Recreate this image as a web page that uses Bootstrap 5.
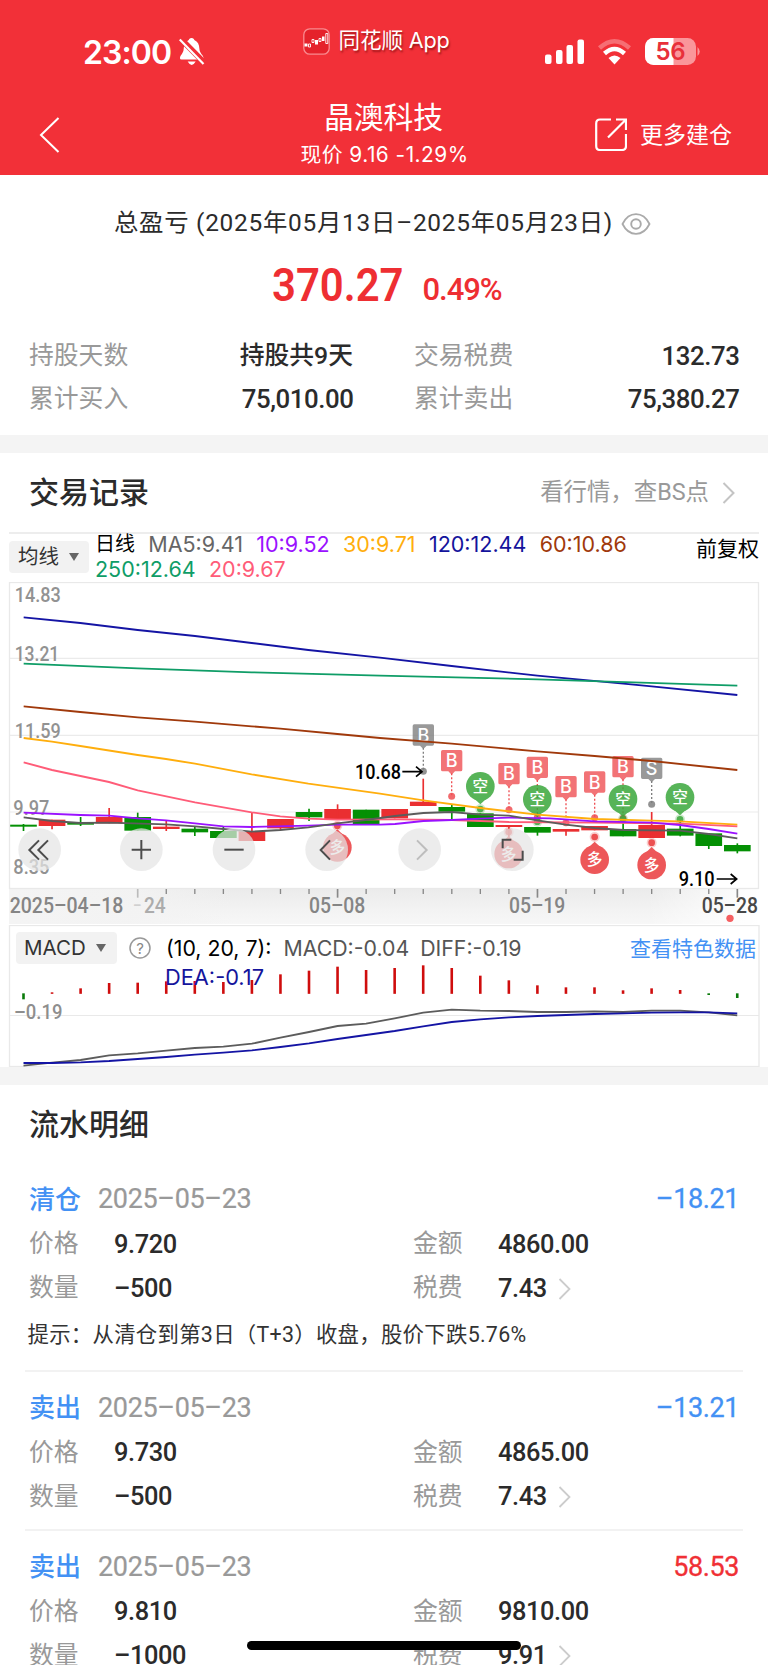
<!DOCTYPE html>
<html lang="zh-CN">
<head>
<meta charset="utf-8">
<meta name="viewport" content="width=device-width, initial-scale=1">
<title>晶澳科技 交易记录</title>
<link href="https://cdn.jsdelivr.net/npm/bootstrap@5.3.0/dist/css/bootstrap.min.css" rel="stylesheet">
<style>
html,body{height:1665px;overflow:hidden}
body{font-family:Roboto,"Noto Sans CJK SC",sans-serif;color:#2b2b2b;font-size:24.8px;line-height:1;background:#fff}
svg{display:block;flex:none}
.sf{font-family:Inter,"Noto Sans CJK SC",sans-serif}
.top-area{background:#f23038;color:#fff;height:174.500px}
.status{height:92px;padding:0 68px 0 83px}
.clock{font-size:32px;font-weight:600;letter-spacing:-.9px;width:96px;margin-top:14px}
.status svg{margin-top:12px}
.app-tag{font-size:21.6px;margin:-10px 0 0 98px;gap:9px;text-shadow:1px 2px 2px rgba(90,0,0,.55)}
.app-tag svg{margin:0}
.app-tag span{letter-spacing:-.15px}
.title-row{height:82px;padding:0 36px 0 38px}
.side{width:200px;padding-top:3px}
.stock{font-size:29.8px;line-height:38px;margin-top:5px;margin-left:-3px}
.price-line{font-size:20.8px;line-height:37px;letter-spacing:.5px;margin-left:-1px}
.more{font-size:23px;gap:13px}
.more span{padding-top:2px}
.sum-head{height:98px;font-size:24.4px;gap:8px;padding-right:3px}
.sum-head .txt{letter-spacing:.74px}
.sum-num{height:25px;gap:21px;color:#ee2e32;padding-left:5px;line-height:24px}
.big{font-size:46px;font-weight:600;display:inline-block;width:130px;transform:scaleX(.91);transform-origin:left}
.pct{font-size:31px;font-weight:500;margin-top:9px;letter-spacing:-1.1px}
.stats{padding:37.500px 29px 0;height:137.500px}
.stats .line-row{height:43px}
.line-row>div{display:flex;justify-content:space-between;align-items:center}
.line-row>div:first-child{width:324px;margin-right:61px}
.line-row>div:last-child{width:325px}
.lbl{color:#999}
.val{font-weight:500;color:#2b2b2b}
.stats .num{font-size:25.8px;letter-spacing:-.45px;margin-right:-.4px}
.band{height:18px;background:#f4f4f4}
.sec{font-size:30px;font-weight:500;color:#2b2b2b}
.rec-head{height:79px;padding:0 33px 0 29px}
.rec-head .lnk{font-size:23.4px;color:#999;gap:13px}
.legend-bar{height:50px;margin:0 9px;border-top:2px solid #ededed}
.drop{background:#f2f2f2;border:0;border-radius:4px;color:#333;height:32px;padding:0 9px;display:flex;align-items:center;gap:10px;font-size:20.5px}
.drop:after{content:"";border:5.5px solid transparent;border-top:8px solid #666;border-bottom:0}
.legend-bar .drop{width:80px;margin-top:7px;flex:none}
.ma{font-size:21.5px;line-height:25px;margin:-2px 0 0 6px;width:590px;column-gap:13.3px}
.adj{font-size:21px;color:#000;line-height:31px;margin-left:auto}
.macd-panel{height:142px;position:relative}
.macd-head{position:absolute;left:16px;right:12px;top:7px;height:32px;font-size:21.3px}
.macd-head>span{padding-top:1px}
.macd-head .drop{width:101px;padding:0 8px}
.help{margin:0 15px 0 12px}
.dea{position:absolute;left:165px;top:40px;line-height:25px;font-size:21.8px;color:#14149c}
.detail-head{height:80px;padding-left:29px}
.rec{margin:0 25px;padding:0 4px;border-bottom:2px solid #f2f2f2}
.rec .h{height:46px;font-size:26px}
.dt{color:#999;font-size:27px;letter-spacing:-.35px;margin-left:17px;-webkit-text-stroke:.2px currentColor}
.amt{font-size:27px;margin-left:auto;letter-spacing:-.4px;-webkit-text-stroke:.3px currentColor}
.kv{height:44px}
.kv>div{display:flex;align-items:center;width:384px;flex:none}
.kv .lbl{width:85px}
.kv .val{font-size:25.4px;letter-spacing:-.4px;font-weight:500}
.hint{font-size:21.4px;height:48px;margin-left:-1.500px;color:#333;letter-spacing:.28px}
.chev{margin-left:11px}
.blue{color:#4391f4}.redc{color:#f03035}
.home{position:fixed;left:247px;top:1641px;width:274px;height:9px;border-radius:5px;background:#000}
</style>
</head>
<body>
<header class="top-area">
  <div class="status d-flex align-items-center sf">
    <span class="clock">23:00</span>
    <svg width="25.500" height="27.500" viewBox="0 0 26 28"><path d="M12.800 0C10.800 0 10.300 1.200 10 2C6.500 3.500 5 6.500 4.800 11C4.600 16 1 17.500 1 20.500Q1 21.800 2.500 21.800H23.500Q25 21.800 25 20.500C25 17.500 21 16 20.800 11C20.600 6.500 19.200 3.500 15.600 2C15.300 1.200 14.800 0 12.800 0ZM8.800 24Q13 31 17 24Z" fill="#fff"/><path d="M1 0L26 25.500" stroke="#f23038" stroke-width="6"/><path d="M.8 1.500L25 26.500" stroke="#fff" stroke-width="2.200"/></svg>
    <div class="app-tag d-flex align-items-center">
      <svg width="27" height="27" viewBox="0 0 27 27"><rect x=".8" y=".8" width="25.400" height="25.400" rx="6" fill="#e5222b" stroke="#f98b90" stroke-width="1.300"/><path d="M1.500 15.500h3v3h-3zM12 12h3v4.500h-3zM19 8.500h2.500V13H19z" fill="#fff"/><path d="M5.500 16h2v3h-2zM9 11.500h2v3h-2zM16 10.500h2v3h-2zM22.800 5.500h2v10h-2z" fill="none" stroke="#fff" stroke-width=".9"/></svg>
      <span>同花顺 App</span>
    </div>
    <svg class="ms-auto" width="156" height="28" viewBox="544 38 156 28"><g fill="#fff"><rect x="545" y="54.500" width="6.500" height="9.500" rx="2"/><rect x="556" y="50" width="6.500" height="14" rx="2"/><rect x="566.500" y="45" width="6.500" height="19" rx="2"/><rect x="577.500" y="39.500" width="6.500" height="24.500" rx="2"/></g>
    <g fill="none" stroke="#fff" stroke-width="4.500"><path d="M599.500 48Q614.500 34.500 629.500 48" opacity=".3"/><path d="M604.500 53.500Q614.500 44.500 624.500 53.500"/></g><path d="M608.500 58Q614.500 53 620.500 58L614.500 64.500Z" fill="#fff"/>
    <rect x="645" y="38" width="51" height="27" rx="8.500" fill="#fa969a"/><path d="M673.500 38H653.500A8.500 8.500 0 0 0 645 46.500V56.500A8.500 8.500 0 0 0 653.500 65H673.500Z" fill="#fff"/><path d="M697.500 47Q702 51.500 697.500 56Z" fill="#fa969a"/><text x="670.500" y="60" text-anchor="middle" font-size="24" font-weight="600" fill="#e8303a" textLength="30">56</text></svg>
  </div>
  <div class="title-row d-flex align-items-center justify-content-between">
    <div class="side"><svg width="22" height="38" viewBox="0 0 22 38"><path d="M20.500 2L3 19L20.500 36" fill="none" stroke="#fff" stroke-width="2"/></svg></div>
    <div class="text-center sf"><div class="stock">晶澳科技</div><div class="price-line">现价 9.16 -1.29%</div></div>
    <div class="side more d-flex align-items-center justify-content-end"><svg width="32" height="33" viewBox="0 0 32 33"><path d="M16 1.500H5Q1.200 1.500 1.200 5.500V28Q1.200 32 5 32H27Q31 32 31 28V16M13 19.500L30.500 2M21 1.500H31V12" fill="none" stroke="#fff" stroke-width="2.200"/></svg><span>更多建仓</span></div>
  </div>
</header>

<section>
  <div class="sum-head d-flex align-items-center justify-content-center"><span class="txt">总盈亏 (2025年05月13日–2025年05月23日)</span>
    <svg width="30" height="22" viewBox="0 0 30 22"><path d="M1.500 11C5 4 9.500 1.200 15 1.200S25 4 28.500 11C25 18 20.500 20.800 15 20.800S5 18 1.500 11Z" fill="none" stroke="#aaa" stroke-width="1.800"/><circle cx="15" cy="11" r="4.800" fill="none" stroke="#aaa" stroke-width="1.900"/></svg></div>
  <div class="sum-num d-flex justify-content-center align-items-center"><span class="big">370.27</span><span class="pct">0.49%</span></div>
  <div class="stats">
    <div class="line-row d-flex"><div><span class="lbl">持股天数</span><span class="val">持股共9天</span></div><div><span class="lbl">交易税费</span><span class="val num">132.73</span></div></div>
    <div class="line-row d-flex"><div><span class="lbl">累计买入</span><span class="val num">75,010.00</span></div><div><span class="lbl">累计卖出</span><span class="val num">75,380.27</span></div></div>
  </div>
</section>
<div class="band"></div>

<section>
  <div class="rec-head d-flex align-items-center justify-content-between"><span class="sec">交易记录</span>
    <span class="lnk d-flex align-items-center"><span>看行情，查BS点</span><svg width="13" height="22" viewBox="0 0 13 22"><path d="M1.500 1L11.500 11L1.500 21" fill="none" stroke="#c4c4c4" stroke-width="2"/></svg></span></div>
  <div class="legend-bar d-flex">
    <button class="drop">均线</button>
    <div class="ma sf d-flex flex-wrap align-content-start"><span style="color:#000;font-size:20px">日线</span><span style="color:#666">MA5:9.41</span><span style="color:#9a12ff">10:9.52</span><span style="color:#ffae0d">30:9.71</span><span style="color:#14149c">120:12.44</span><span style="color:#a0390b">60:10.86</span><span style="color:#0f9d67">250:12.64</span><span style="color:#ff5c78">20:9.67</span></div>
    <span class="adj">前复权</span>
  </div>
  <svg id="kline" width="768" height="343" viewBox="0 36 2304 1029" font-family="Roboto,'Noto Sans CJK SC',sans-serif"></svg>
  <div class="macd-panel">
    <svg id="macd" width="768" height="142" viewBox="0 925 768 142" font-family="Roboto,sans-serif"></svg>
    <div class="macd-head sf d-flex align-items-center">
      <button class="drop sf">MACD</button>
      <svg class="help" width="22" height="22" viewBox="0 0 22 22"><circle cx="11" cy="11" r="10" fill="none" stroke="#999" stroke-width="1.500"/><text x="11" y="16.500" text-anchor="middle" font-size="15" fill="#888">?</text></svg>
      <span style="color:#000">(10, 20, 7):</span><span style="color:#555;margin-left:12px">MACD:-0.04</span><span style="color:#555;margin-left:11px">DIFF:-0.19</span>
      <span class="ms-auto blue" style="font-size:21px">查看特色数据</span>
    </div>
    <div class="dea sf">DEA:-0.17</div>
  </div>
</section>
<div class="band"></div>

<section>
  <div class="detail-head d-flex align-items-center sec">流水明细</div>
  <div class="rec" style="height:206.500px;padding-top:11.500px">
    <div class="h d-flex align-items-center"><span class="blue fw-medium">清仓</span><span class="dt">2025–05–23</span><span class="amt blue">–18.21</span></div>
    <div class="kv d-flex"><div><span class="lbl">价格</span><span class="val">9.720</span></div><div><span class="lbl">金额</span><span class="val">4860.00</span></div></div>
    <div class="kv d-flex"><div><span class="lbl">数量</span><span class="val">–500</span></div><div><span class="lbl">税费</span><span class="val">7.43</span><svg class="chev" width="13" height="22" viewBox="0 0 13 22"><path d="M1.500 1L11.500 11L1.500 21" fill="none" stroke="#ccc" stroke-width="1.800"/></svg></div></div>
    <div class="hint d-flex align-items-center">提示：从清仓到第3日（T+3）收盘，股价下跌5.76%</div>
  </div>
  <div class="rec" style="height:159px;padding-top:13.500px">
    <div class="h d-flex align-items-center"><span class="blue fw-medium">卖出</span><span class="dt">2025–05–23</span><span class="amt blue">–13.21</span></div>
    <div class="kv d-flex"><div><span class="lbl">价格</span><span class="val">9.730</span></div><div><span class="lbl">金额</span><span class="val">4865.00</span></div></div>
    <div class="kv d-flex"><div><span class="lbl">数量</span><span class="val">–500</span></div><div><span class="lbl">税费</span><span class="val">7.43</span><svg class="chev" width="13" height="22" viewBox="0 0 13 22"><path d="M1.500 1L11.500 11L1.500 21" fill="none" stroke="#ccc" stroke-width="1.800"/></svg></div></div>
  </div>
  <div class="rec" style="height:159px;padding-top:13.500px">
    <div class="h d-flex align-items-center"><span class="blue fw-medium">卖出</span><span class="dt">2025–05–23</span><span class="amt redc">58.53</span></div>
    <div class="kv d-flex"><div><span class="lbl">价格</span><span class="val">9.810</span></div><div><span class="lbl">金额</span><span class="val">9810.00</span></div></div>
    <div class="kv d-flex"><div><span class="lbl">数量</span><span class="val">–1000</span></div><div><span class="lbl">税费</span><span class="val">9.91</span><svg class="chev" width="13" height="22" viewBox="0 0 13 22"><path d="M1.500 1L11.500 11L1.500 21" fill="none" stroke="#ccc" stroke-width="1.800"/></svg></div></div>
  </div>
</section>
<div class="home"></div>
<script src="https://cdn.jsdelivr.net/npm/bootstrap@5.3.0/dist/js/bootstrap.bundle.min.js"></script>
<script>
// Daily candles: colour, body top, body bottom, wick top, wick bottom
const R='#ea2f31',G='#049004';
const candles=[[G,764,770,762,783],[R,749,768,749,778],[G,757,764,741,768],[R,741,760,714,760],[G,741,782,728,782],[R,770,777,752,783],[G,776,787,770,798],[G,783,804,770,804],[R,784,813,727,813],[R,747,775,747,780],[G,726,742,716,753],[R,717,748,703,748],[G,719,762,719,762],[R,717,745,717,745],[R,695,708,626,708],[G,711,725,704,748],[G,730,771,730,771],[R,765,771,765,800],[G,771,788,771,797],[R,777,785,777,797],[R,768,781,768,781],[G,777,799,760,799],[R,765,804,726,804],[G,776,797,750,799],[G,790,828,790,837],[G,825,844,820,850]];
const cx=i=>70.5+85.66*i;
const text=(x,y,s,w,size,fill,extra='')=>`<text x="${x}" y="${y}" font-size="${size}" fill="${fill}" textLength="${w}" lengthAdjust="spacingAndGlyphs" ${extra}>${s}</text>`;
const M='font-weight="500"';
let k='<defs><linearGradient id="ax" x2="0" y2="1"><stop stop-color="#ebebeb"/><stop offset=".6" stop-color="#f3f3f3"/><stop offset="1" stop-color="#f7f7f7"/></linearGradient><linearGradient id="fade"><stop stop-color="#f4f4f4"/><stop offset=".16" stop-color="#f3f3f3" stop-opacity=".9"/><stop offset=".3" stop-color="#f3f3f3" stop-opacity="0"/><stop offset=".85" stop-color="#fff" stop-opacity="0"/><stop offset="1" stop-color="#fff"/></linearGradient></defs>';
k+='<rect x="27" y="957" width="2250" height="105" fill="url(#ax)"/><rect x="27" y="957" width="2250" height="105" fill="url(#fade)"/>';
k+='<path d="M28 265H2275M28 496H2275M28 726H2275" stroke="#ebebeb" stroke-width="3.500"/><rect x="28.500" y="37.500" width="2247" height="918" fill="none" stroke="#e9e9e9" stroke-width="4"/>';
k+=text(44,97,'14.83',138,62,'#929292',M)+text(44,274,'13.21',134,62,'#929292',M)+text(44,504,'11.59',138,62,'#929292',M)+text(40,734,'9.97',108,62,'#929292',M)+text(40,911,'8.35',108,62,'#929292',M);
for(let i=4;i<26;i++){const b=(i-4)%7==0;k+=`<path d="M${cx(i)} 957V${b?983:972}" stroke="${i==4?'#bbb':'#888'}" stroke-width="${b?5:4}"/>`}
candles.forEach((c,i)=>{k+=`<rect x="${cx(i)-40}" y="${c[1]}" width="80" height="${c[2]-c[1]}" fill="${c[0]}"/><path d="M${cx(i)} ${c[3]}V${c[4]}" stroke="${c[0]}" stroke-width="5"/>`});
function flag(x,t,d,s,c){k+=`<path d="M${x} ${t+70}V${d}" stroke="${c}" stroke-width="4" stroke-dasharray="6 6"/><circle cx="${x}" cy="${d}" r="10.500" fill="${c}" opacity=".85"/><path d="M${x-27} ${t}h54q5 0 5 5v54q0 5 -5 5h-17l-10 10l-10 -10h-17q-5 0 -5 -5v-54q0 -5 5 -5Z" fill="${c}" opacity=".8"/><text x="${x}" y="${t+52}" font-size="54" font-family="Inter" text-anchor="middle" fill="#fff" font-weight="500">${s}</text>`}
function pin(x,y,d,s,c){const q=d>y?1:-1;k+=`<g opacity=".85"><circle cx="${x}" cy="${y}" r="43" fill="${c}"/><path d="M${x-18} ${y+q*37}L${x} ${y+q*54}L${x+18} ${y+q*37}Z" fill="${c}"/><circle cx="${x}" cy="${d}" r="10" fill="${c}"/></g><circle cx="${x}" cy="${d}" r="15" fill="${c}" opacity=".25"/><text x="${x}" y="${y+17}" font-size="47" font-weight="500" text-anchor="middle" fill="#fff">${s}</text>`}
const F='#ef5054',N='#7f7f7f',P='#ea3a3d',Q='#3aa73c';
flag(1270,463,604,'B',N);flag(1355,540,679,'B',F);flag(1527,579,719,'B',F);flag(1612,560,742,'B',F);flag(1698,618,758,'B',F);flag(1784,604,743,'B',F);flag(1869,558,745,'B',F);flag(1955,563,703,'S',N);
pin(1441,649,717,'空',Q);pin(1612,688,755,'空',Q);pin(1869,687,747,'空',Q);pin(2040,682,748,'空',Q);
pin(1012,832,767,'多',P);pin(1526,852,786,'多',P);pin(1784,869,801,'多',P);pin(1955,885,818,'多',P);
// Moving averages
[['#1414a4','71,142 241,159 413,180 585,198 755,219 925,240 1140,263 1355,288 1612,317 1870,341 1955,349 2212,375'],
['#0f9d67','71,281 413,295 755,307 1140,317 1612,328 2212,347'],
['#a0390b','71,409 241,426 413,442 585,455 755,469 841,476 1012,492 1140,504 1355,521 1612,544 1784,558 1955,573 2212,600'],
['#ffae0d','71,504 156,515 241,528 413,555 498,567 585,581 755,613 925,641 1140,671 1270,691 1441,714 1612,734 1784,747 1955,752 2040,754 2212,764'],
['#ff5c78','71,577 156,600 327,636 413,661 585,697 755,727 841,739 925,746 1012,749 1200,748 1355,750 1527,756 1784,758 2040,761 2212,769'],
['#9a12ff','71,728 241,735 327,737 413,745 498,751 585,760 670,769 755,771 925,767 1012,764 1140,764 1185,762 1270,753 1355,750 1441,746 1527,743 1650,745 1784,754 1955,758 2040,765 2126,777 2212,791'],
['#5c5c5c','71,742 156,753 241,759 327,758 498,763 585,769 670,777 755,785 841,780 925,772 1012,760 1097,750 1185,738 1270,729 1355,726 1441,734 1527,737 1612,751 1697,764 1784,774 1870,780 2040,782 2126,792 2212,805']].forEach(l=>k+=`<polyline points="${l[1]}" fill="none" stroke="${l[0]}" stroke-width="5.500"/>`);
k+=text(1065,628,'10.68',138,62,'#000',M)+'<path d="M1207 605H1264M1248 590L1266 605L1248 620" fill="none" stroke="#000" stroke-width="5"/>';
k+=text(2036,949,'9.10',108,62,'#000',M)+'<path d="M2150 927H2208M2192 912L2210 927L2192 942" fill="none" stroke="#000" stroke-width="5"/>';
// Chart tool buttons
[[119,'M117 811L88 840L117 869M144 811L115 840L144 869'],[424,'M395 839H453M424 810V868'],[702,'M673 839H731'],[980,'M990 811L962 840L990 869'],[1259,'M1251 811L1280 840L1251 869'],[1537,'M1508 835V809H1534M1541 869H1568V842']].forEach(b=>k+=`<circle cx="${b[0]}" cy="839" r="64" fill="#e5e5e5" opacity=".72"/><path d="${b[1]}" fill="none" stroke="${b[0]==1259?'#bdbdbd':'#4c4c4c'}" stroke-width="6"/>`);
k+=text(29,1029,'2025–04–18',341,64,'#858585',M)+text(399,1029,'–',26,64,'#d0d0d0')+text(432,1029,'24',65,64,'#acacac',M)+text(927,1029,'05–08',169,64,'#858585',M)+text(1527,1029,'05–19',169,64,'#858585',M)+text(2105,1029,'05–28',169,64,'#484848',M)+'<circle cx="2190" cy="1045" r="11" fill="#f55f61"/>';
document.getElementById('kline').innerHTML=k;
// MACD histogram and its two lines, in thirds of a pixel below y=900
const bars=[298,277,265,249,248,244,243,246,240,223,212,200,210,204,196,204,227,241,256,262,262,271,265,270,285,294];
const diff=[497,488,480,466,460,452,444,440,431,413,396,378,371,355,338,329,332,333,336,336,334,336,332,332,337,346];
const dea=[489,489,487,483,477,471,464,458,451,441,430,417,405,393,379,366,358,352,348,345,342,340,338,337,337,340];
const X=i=>23.5+28.55*i,Y=v=>900+v/3;
let m='<rect x="9.500" y="925.500" width="749.500" height="141" fill="#fff" stroke="#e9e9e9" stroke-width="1.300"/><path d="M10 1015.500H759" stroke="#e9e9e9" stroke-width="1.200"/>';
bars.forEach((v,i)=>m+=`<path d="M${X(i)} ${Y(v>281?280:281.5)}V${Y(v)}" stroke="${v>281?'#0a7a0a':'#cf0d0d'}" stroke-width="2.600"/>`);
[[diff,'#5c5c5c'],[dea,'#1414a4']].forEach(l=>m+=`<polyline points="${l[0].map((v,i)=>X(i)+','+Y(v)).join(' ')}" fill="none" stroke="${l[1]}" stroke-width="1.800"/>`);
m+=text(14,1018.5,'–0.19',48.5,20.5,'#8e8e8e',M);
document.getElementById('macd').innerHTML=m;
</script>
</body>
</html>
